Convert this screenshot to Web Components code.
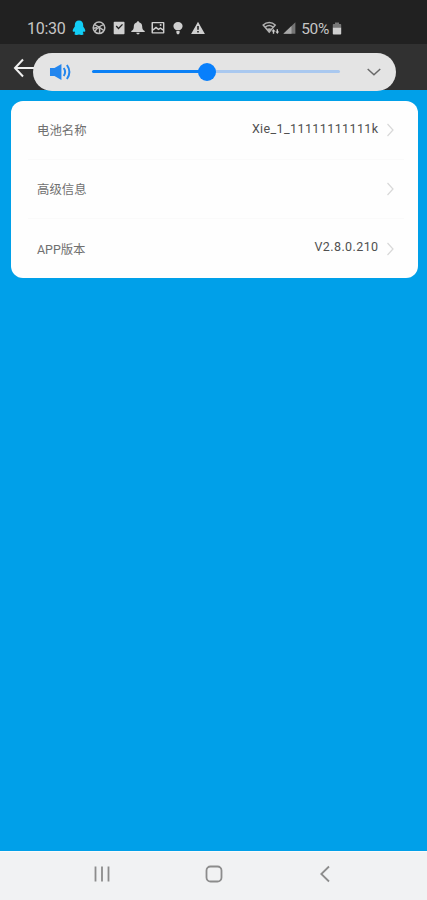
<!DOCTYPE html>
<html lang="zh-CN">
<head>
<meta charset="utf-8">
<meta name="viewport" content="width=device-width, initial-scale=1">
<title>电池信息</title>
<style>
  body {
    background: #00a0e9;
    font-family: Roboto, "Noto Sans CJK SC", sans-serif;
    margin: 0;
  }
</style>
</head>
<body>
<app-screen>
  <status-bar slot="status" time="10:30" battery="50%"></status-bar>
  <title-bar slot="title"></title-bar>
  <volume-panel slot="volume" level="46.6"></volume-panel>
  <settings-card>
    <settings-row label="电池名称">Xie_1_11111111111k</settings-row>
    <settings-row label="高级信息"></settings-row>
    <settings-row label="APP版本">V2.8.0.210</settings-row>
  </settings-card>
  <navigation-bar slot="navigation"></navigation-bar>
</app-screen>

<script>
class AppScreen extends HTMLElement {
  constructor () {
    super()
    this.shadow = this.attachShadow({ mode: 'open' })
  }

  connectedCallback () {
    this.render()
  }

  render () {
    this.shadow.innerHTML =
    /* html */`
    <style>
      :host {
        display: flex;
        flex-direction: column;
        height: 900px;
        overflow: hidden;
        position: relative;
      }

      main {
        flex: 1;
        padding: 10.5px 9.5px 0 11px;
      }

      /* the volume panel floats over the title bar */
      ::slotted([slot="volume"]) {
        left: 32.5px;
        position: absolute;
        top: 52.5px;
      }
    </style>

    <slot name="status"></slot>
    <slot name="title"></slot>
    <main><slot></slot></main>
    <slot name="navigation"></slot>
    <slot name="volume"></slot>
    `
  }
}

customElements.define('app-screen', AppScreen)

class StatusBar extends HTMLElement {
  constructor () {
    super()
    this.shadow = this.attachShadow({ mode: 'open' })
  }

  connectedCallback () {
    this.render()
  }

  render () {
    this.shadow.innerHTML =
    /* html */`
    <style>
      :host {
        align-items: center;
        background: #212121;
        box-sizing: border-box;
        color: #c6c6c6;
        display: flex;
        font-size: 16px;
        height: 44px;
        line-height: 20px;
        padding: 12px 85px 0 27px;
      }

      .time {
        letter-spacing: -0.3px;
        padding-top: 1px;
        width: 44px;
      }

      .notifications {
        display: flex;
        gap: 3.8px;
      }

      .system {
        align-items: center;
        display: flex;
        margin-left: auto;
      }

      .battery {
        font-size: 15.5px;
        letter-spacing: -0.3px;
        margin: 0 3px 0 5px;
        padding-top: 1px;
      }

      svg {
        display: block;
        fill: #cfcfcf;
      }
    </style>

    <span class="time">${this.getAttribute('time')}</span>
    <div class="notifications">
      <svg width="16" height="16" viewBox="0 0 16 16"><path style="fill:#12cdf5" d="M8 .6c-2.700 0-4.200 1.900-4.200 4.500v1.400C2.700 8 1.600 9.700 1.700 11.100c.1 1 .8.9 1.600.2.200.8.6 1.200 1 1.700-.7.3-1 .8-.8 1.300.3.900 3.400.9 4.500.3 1.100.6 4.200.6 4.500-.3.2-.5-.1-1-.8-1.300.4-.5.8-.9 1-1.700.8.7 1.500.8 1.600-.2.1-1.400-1-3.100-2.100-4.600V5.100C12.200 2.500 10.700.6 8 .6z"/></svg>
      <svg width="16" height="16" viewBox="0 0 16 16"><g fill="none" stroke="#bdbdbd" stroke-width="1.500"><circle cx="8" cy="7.800" r="5.800"/><path d="M3.700 4.700C6 6 9.500 8 12.800 10.500M3.800 11.500C5.500 9 8.500 6 12.600 4.600M6 7.700q-1.500-.2-3.300.5M8.200 8q1 2 .3 5"/></g></svg>
      <svg width="16" height="16" viewBox="0 0 16 16"><path fill-rule="evenodd" d="M3.500 1.700h9.200q.8 0 .8.800v10.900q0 .8-.8.800H3.500q-.8 0-.8-.8V2.500q0-.8.8-.8zm1.200 4.700L7.500 9.400 12 4.800 11 3.900 7.500 7.400 5.700 5.500z"/></svg>
      <svg width="16" height="16" viewBox="0 0 16 16"><path d="M8 1.200c.7 0 1.100.4 1.100 1.100C11.200 2.900 12.200 4.500 12.200 6.400c0 2.300.6 3.500 2.500 4.500v1.200H1.300v-1.200c1.900-1 2.500-2.200 2.500-4.500 0-1.900 1-3.500 3.100-4.100 0-.7.400-1.100 1.100-1.100zM6.300 12.800h3.400c-.2 1-.8 1.600-1.700 1.600s-1.500-.6-1.700-1.600z"/></svg>
      <svg width="16" height="16" viewBox="0 0 16 16"><path fill-rule="evenodd" d="M2.300 1.900h11.300q.8 0 .8.800v10q0 .8-.8.800H2.300q-.8 0-.8-.8v-10q0-.8.8-.8zM3 3.300V9l3-2.500 2.500 2 1.900-1.300L13 9V3.300zm0 7.400v1.500h10v-1.500L10.400 9l-1.900 1.300L6 8.400z"/><circle cx="10.600" cy="5" r="1"/></svg>
      <svg width="16" height="16" viewBox="0 0 16 16"><path d="M8 1.900c2.700 0 4.600 1.800 4.600 4.100 0 2-1.300 3-2.400 4H5.800c-1.100-1-2.400-2-2.400-4C3.400 3.700 5.300 1.900 8 1.900zM6.400 10.700h3.200V13L8.800 14.200H7.200L6.400 13z"/></svg>
      <svg width="16" height="16" viewBox="0 0 16 16"><path fill-rule="evenodd" d="M8 1.700l6.900 12.200H1.100zM7.200 6v3.800h1.600V6zm0 4.900v1.500h1.600v-1.500z"/></svg>
    </div>
    <div class="system">
      <svg width="18" height="16" viewBox="0 0 18 16"><g fill="none" stroke="#b0b0b0" stroke-width="1.500"><path d="M1.200 5C4.600 1.700 9.800 1.700 13.200 5L7.200 12z"/><path d="M3.300 7.200C5.700 5.200 8.700 5.200 11.100 7.200"/></g><path fill="#b0b0b0" d="M7.200 12.500L4.700 9q2.500-1.600 5 0z"/><path d="M11.500 8.900l1.900 2.500h-1.200v2.300h-1.400v-2.300H9.600zM15.300 13.900l-1.900-2.500h1.200V9.300H16v2.100h1.200z"/></svg>
      <svg style="margin-left:3px" width="13" height="14" viewBox="0 0 13 14"><path fill="#757575" d="M12.400 1.200v11.600H.4z"/><path fill="#a9a9a9" d="M8.500 5v7.800H.4z"/></svg>
      <span class="battery">${this.getAttribute('battery')}</span>
      <svg width="10" height="15" viewBox="0 0 10 15"><path fill="#777" d="M3 1.500h4V3h1.500q.7 0 .7.700V7H.8V3.700Q.8 3 1.500 3H3z"/><path d="M.8 6.800h8.400v6q0 .8-.8.800H1.600q-.8 0-.8-.8z"/></svg>
    </div>
    `
  }
}

customElements.define('status-bar', StatusBar)

class TitleBar extends HTMLElement {
  constructor () {
    super()
    this.shadow = this.attachShadow({ mode: 'open' })
  }

  connectedCallback () {
    this.render()
  }

  render () {
    this.shadow.innerHTML =
    /* html */`
    <style>
      :host {
        align-items: center;
        background: #313131;
        box-sizing: border-box;
        display: flex;
        height: 46px;
        padding: 2px 0 0 13px;
      }

      svg {
        fill: none;
        stroke: #f0f0f0;
        stroke-width: 2;
      }
    </style>

    <svg width="24" height="20" viewBox="0 0 24 20"><path d="M10 1.500L2 10l8 8.500M2 10h20"/></svg>
    `
  }
}

customElements.define('title-bar', TitleBar)

class VolumePanel extends HTMLElement {
  constructor () {
    super()
    this.shadow = this.attachShadow({ mode: 'open' })
  }

  connectedCallback () {
    this.render()
  }

  render () {
    this.shadow.innerHTML =
    /* html */`
    <style>
      :host {
        align-items: center;
        background: #e4e4e4;
        border-radius: 19px;
        box-sizing: border-box;
        display: flex;
        height: 38px;
        padding: 0 14.5px 0 16.5px;
        width: 363.5px;
      }

      .track {
        align-items: center;
        background: linear-gradient(to right, #0b80f5 var(--level), #a9c8ef var(--level));
        border-radius: 2px;
        display: flex;
        height: 3.5px;
        margin: 0 26px 0 19px;
        width: 249px;
      }

      .thumb {
        background: #087ffb;
        border-radius: 50%;
        flex: none;
        height: 18px;
        margin-left: calc(var(--level) - 9px);
        width: 18px;
      }
    </style>

    <svg width="24" height="20" viewBox="0 0 24 20"><path fill="#2386ee" d="M1 6h4.500L12.500 2v16l-7-4H1z"/><path fill="none" stroke="#2386ee" stroke-width="2" d="M14.800 6q2.800 4 0 8M18 3q5 7 0 14"/></svg>
    <div class="track" style="--level: ${this.getAttribute('level')}%"><div class="thumb"></div></div>
    <svg width="16" height="10" viewBox="0 0 16 10"><path fill="none" stroke="#696969" stroke-width="1.500" d="M1.700 2L8 7.800 14.300 2"/></svg>
    `
  }
}

customElements.define('volume-panel', VolumePanel)

class SettingsCard extends HTMLElement {
  constructor () {
    super()
    this.shadow = this.attachShadow({ mode: 'open' })
  }

  connectedCallback () {
    this.render()
  }

  render () {
    this.shadow.innerHTML =
    /* html */`
    <style>
      :host {
        background: #fefefe;
        border-radius: 12px;
        display: block;
        padding: 0 14px 0 17px;
      }

      ::slotted(:not(:last-child)) {
        border-bottom: 1px solid #fafafa;
      }
    </style>

    <slot></slot>
    `
  }
}

customElements.define('settings-card', SettingsCard)

class SettingsRow extends HTMLElement {
  constructor () {
    super()
    this.shadow = this.attachShadow({ mode: 'open' })
  }

  connectedCallback () {
    this.render()
  }

  render () {
    this.shadow.innerHTML =
    /* html */`
    <style>
      :host {
        align-items: center;
        box-sizing: border-box;
        display: flex;
        height: 59.1px;
        padding: 1px 9px 0;
      }

      .label {
        color: #707070;
        font-size: 12.4px;
        line-height: 18px;
        padding-top: 2px;
      }

      .value {
        color: #505050;
        font-size: 12.5px;
        letter-spacing: 0.4px;
        line-height: 18px;
        margin: 0 7px 3px auto;
      }
    </style>

    <span class="label">${this.getAttribute('label')}</span>
    <span class="value"><slot></slot></span>
    <svg width="9" height="14" viewBox="0 0 9 14"><path fill="none" stroke="#d8d8d8" stroke-width="1.200" d="M1.500 1L7 7l-5.500 6"/></svg>
    `
  }
}

customElements.define('settings-row', SettingsRow)

class NavigationBar extends HTMLElement {
  constructor () {
    super()
    this.shadow = this.attachShadow({ mode: 'open' })
  }

  connectedCallback () {
    this.render()
  }

  render () {
    this.shadow.innerHTML =
    /* html */`
    <style>
      :host {
        align-items: center;
        background: #f1f2f3;
        border-top: 1px solid #fafafa;
        box-sizing: border-box;
        display: flex;
        gap: 91.5px;
        height: 49.5px;
        justify-content: center;
        padding-bottom: 3px;
      }

      svg {
        fill: none;
        stroke: #8c8c8c;
        stroke-width: 1.800;
      }
    </style>

    <svg width="20" height="20" viewBox="0 0 20 20"><path d="M3.500 2.500v15M10 2.500v15M16.500 2.500v15"/></svg>
    <svg width="20" height="20" viewBox="0 0 20 20"><rect x="2.500" y="2.500" width="15" height="15" rx="4"/></svg>
    <svg width="20" height="20" viewBox="0 0 20 20"><path d="M14 2.500L6.300 10l7.700 7.500"/></svg>
    `
  }
}

customElements.define('navigation-bar', NavigationBar)
</script>
</body>
</html>
